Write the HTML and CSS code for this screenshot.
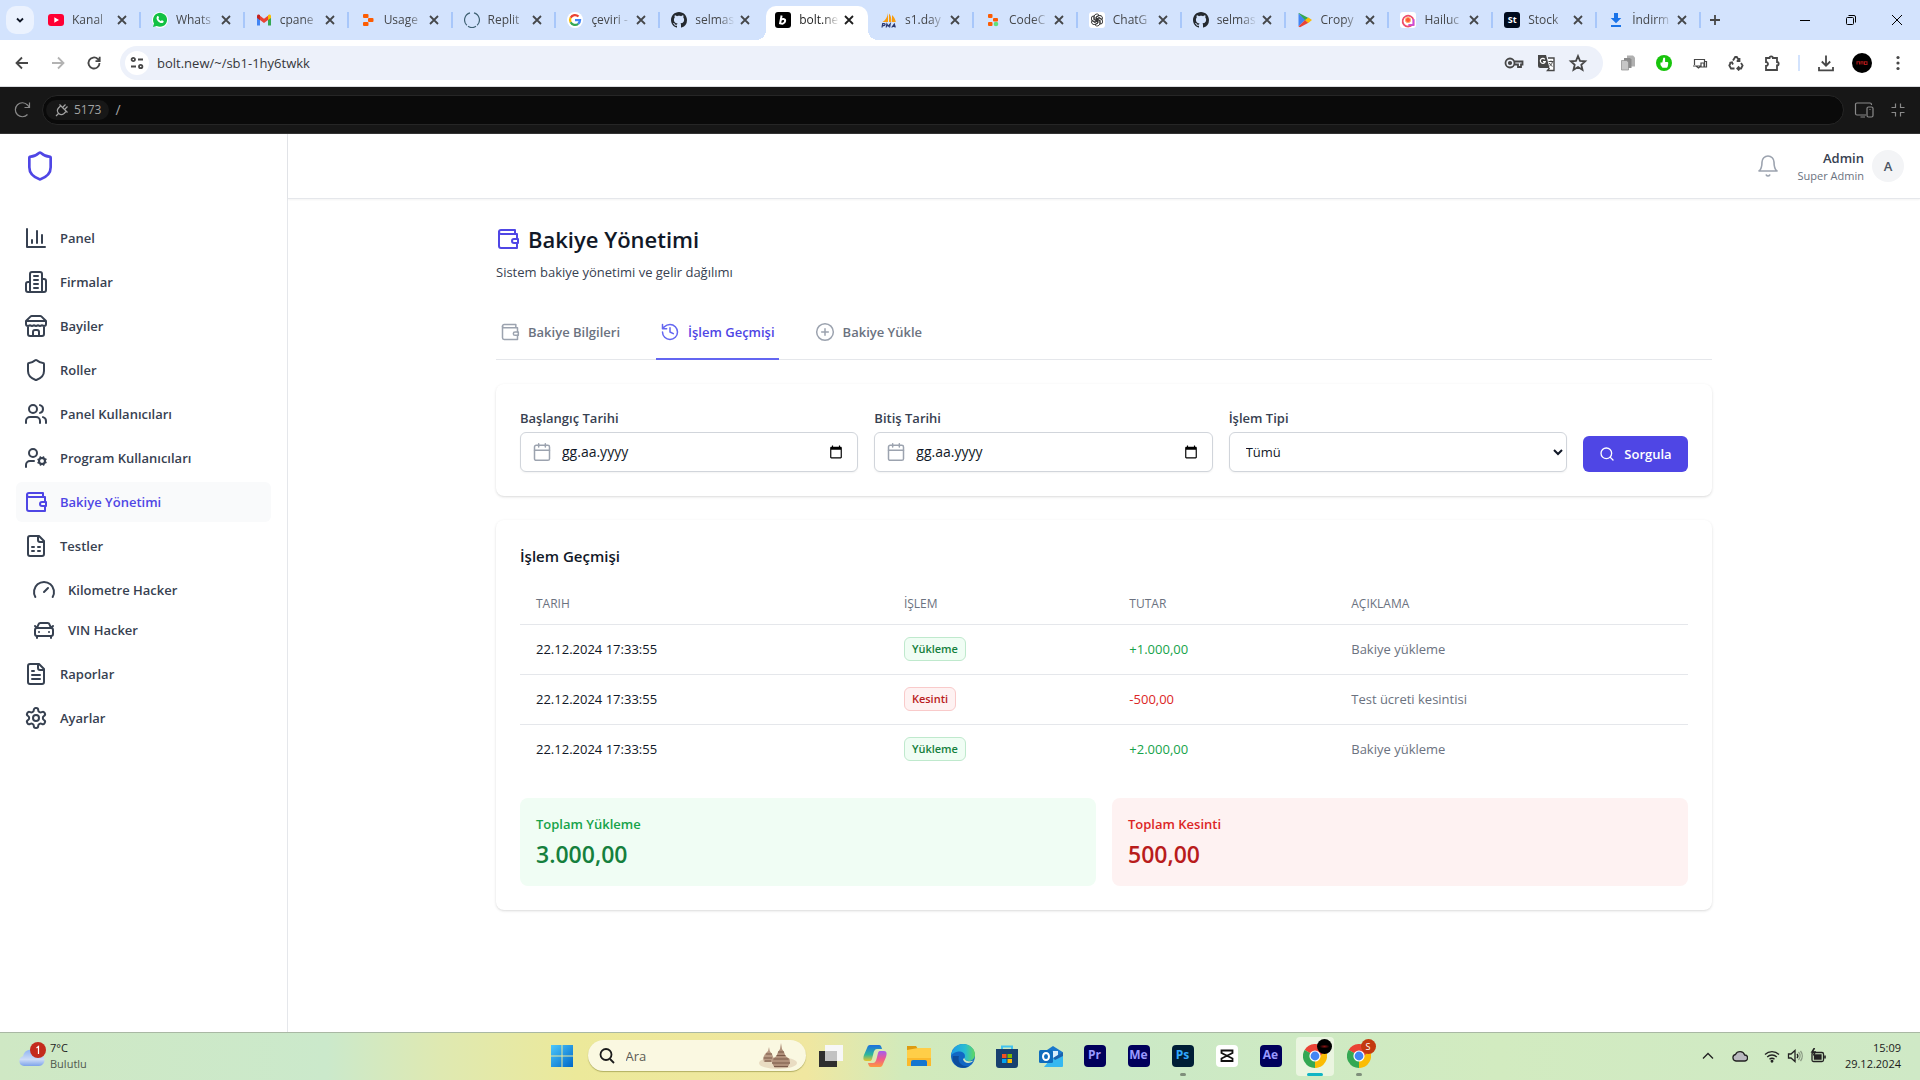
FILE: index.html
```html
<!DOCTYPE html>
<html lang="tr">
<head>
<meta charset="utf-8">
<meta name="viewport" content="width=device-width, initial-scale=1">
<title>Bakiye Yönetimi</title>
<link rel="stylesheet" href="styles.css">
</head>
<body>
<svg class="sprite" aria-hidden="true">
  <symbol id="i-x" viewBox="0 0 16 16"><path d="M4 4l8 8M12 4l-8 8"/></symbol>
  <symbol id="i-github" viewBox="0 0 16 16"><path fill="#24292f" d="M8 0C3.58 0 0 3.58 0 8c0 3.54 2.29 6.53 5.47 7.59.4.07.55-.17.55-.38 0-.19-.01-.82-.01-1.49-2.01.37-2.53-.49-2.69-.94-.09-.23-.48-.94-.82-1.13-.28-.15-.68-.52-.01-.53.63-.01 1.08.58 1.23.82.72 1.21 1.87.87 2.33.66.07-.52.28-.87.51-1.07-1.78-.2-3.64-.89-3.64-3.95 0-.87.31-1.59.82-2.15-.08-.2-.36-1.02.08-2.12 0 0 .67-.21 2.2.82.64-.18 1.32-.27 2-.27s1.36.09 2 .27c1.53-1.04 2.2-.82 2.2-.82.44 1.1.16 1.92.08 2.12.51.56.82 1.27.82 2.15 0 3.07-1.87 3.75-3.65 3.95.29.25.54.73.54 1.48 0 1.07-.01 1.93-.01 2.2 0 .21.15.46.55.38A8.01 8.01 0 0 0 16 8c0-4.42-3.58-8-8-8z"/></symbol>
  <symbol id="i-shield" viewBox="0 0 24 24"><path d="M20 13c0 5-3.5 7.5-7.66 8.95a1 1 0 0 1-.67-.01C7.5 20.5 4 18 4 13V6a1 1 0 0 1 1-1c2 0 4.5-1.2 6.24-2.72a1.17 1.17 0 0 1 1.52 0C14.51 3.81 17 5 19 5a1 1 0 0 1 1 1z"/></symbol>
  <symbol id="i-wallet" viewBox="0 0 24 24"><path d="M21 12V7H5a2 2 0 0 1 0-4h14v4"/><path d="M3 5v14a2 2 0 0 0 2 2h16v-5"/><path d="M18 12a2 2 0 0 0 0 4h4v-4Z"/></symbol>
  <symbol id="i-calendar" viewBox="0 0 24 24"><path d="M8 2v4M16 2v4M3 10h18"/><rect x="3" y="4" width="18" height="18" rx="2"/></symbol>
  <symbol id="i-picker" viewBox="0 0 24 24"><path d="M20 3h-1V1h-2v2H7V1H5v2H4c-1.100 0-2 .9-2 2v16c0 1.100.9 2 2 2h16c1.100 0 2-.9 2-2V5c0-1.100-.9-2-2-2zm0 18H4V8h16v13z"/></symbol>
  <symbol id="i-chrome" viewBox="0 0 24 24"><path fill="#ea4335" d="M12 12L1.600 6A12 12 0 0 1 22.400 6z"/><path fill="#34a853" d="M12 12L12 24A12 12 0 0 1 1.600 6z"/><path fill="#fbbc05" d="M12 12L22.400 6A12 12 0 0 1 12 24z"/><path fill="#ea4335" d="M12 6.400h10.600L17 12z"/><path fill="#34a853" d="M7 9.200L1.600 6.500 6 18l5-1z"/><path fill="#fbbc05" d="M17 15l-5 9 6-2z"/><circle cx="12" cy="12" r="5.600" fill="#fff"/><circle cx="12" cy="12" r="4.400" fill="#4285f4"/></symbol>
</svg>

<header class="browser">
  <div class="tabstrip">
    <button class="tab-search" aria-label="Sekmelerde ara"><svg class="line-icon s16" viewBox="0 0 16 16"><path d="M5 6.500l3 3 3-3"/></svg></button>
    <div class="tabs">
      <div class="tab"><svg class="fav" viewBox="0 0 16 16"><rect y="2" width="16" height="12" rx="3" fill="#ff0033"/><path d="M6.300 5.300v5.400L11 8z" fill="#fff"/></svg><span class="tab-title">Kanal</span><button class="tab-close" aria-label="Kapat"><svg class="line-icon"><use href="#i-x"/></svg></button></div>
      <div class="tab"><svg class="fav" viewBox="0 0 16 16"><circle cx="8" cy="8" r="8" fill="#fff"/><path fill="#12c143" d="M1 15l1-3.600A7 7 0 1 1 4.700 14z"/><path fill="#fff" d="M5.200 4.200c.5-.5 1-.3 1.200.1l.6 1.400c0 .4-.4.8-.6 1 .5 1 1.500 1.900 2.600 2.300.4-.2.600-.8 1-.8l1.500.7c.3.400.1 1.300-.3 1.600-1.500 1.200-3.700.3-5.200-1.200S4 5.500 5.200 4.200z"/></svg><span class="tab-title">Whats</span><button class="tab-close" aria-label="Kapat"><svg class="line-icon"><use href="#i-x"/></svg></button></div>
      <div class="tab"><svg class="fav" viewBox="0 0 16 16"><path fill="#4285f4" d="M1 4v9.500h3V7z"/><path fill="#34a853" d="M12 7v6.500h3V4z"/><path fill="#ea4335" d="M3 3l5 3.800L13 3v4.200L8 11 3 7.200z"/><path fill="#c5221f" d="M1 4c0-1.500 1.700-2 3-1v5L1 6z"/><path fill="#fbbc04" d="M15 4c0-1.500-1.700-2-3-1v5l3-2z"/></svg><span class="tab-title">cpane</span><button class="tab-close" aria-label="Kapat"><svg class="line-icon"><use href="#i-x"/></svg></button></div>
      <div class="tab"><svg class="fav" viewBox="0 0 16 16" fill="#fd5c02"><rect x="3" y="2" width="5.500" height="4" rx="1"/><rect x="8" y="6" width="5.500" height="4" rx="1"/><rect x="3" y="10" width="5.500" height="4" rx="1"/></svg><span class="tab-title">Usage</span><button class="tab-close" aria-label="Kapat"><svg class="line-icon"><use href="#i-x"/></svg></button></div>
      <div class="tab"><svg class="fav" viewBox="0 0 16 16" fill="none" stroke="#3f6173" stroke-width="1.200"><path d="M10 .8a7.400 7.400 0 0 1 3.200 12.400M12 14.300a7.400 7.400 0 0 1-8 0M2.800 13.200A7.400 7.400 0 0 1 6 .8"/></svg><span class="tab-title">Replit</span><button class="tab-close" aria-label="Kapat"><svg class="line-icon"><use href="#i-x"/></svg></button></div>
      <div class="tab"><svg class="fav" viewBox="0 0 16 16"><circle cx="8" cy="8" r="8" fill="#fff"/><g fill="none" stroke-width="2.300"><path stroke="#ea4335" d="M3.600 5.700A5 5 0 0 1 11.500 4.500"/><path stroke="#fbbc05" d="M3.600 10.300a5 5 0 0 1 0-4.600"/><path stroke="#34a853" d="M11.200 11.800a5 5 0 0 1-7.600-1.500"/><path stroke="#4285f4" d="M8 8.100h5a5 5 0 0 1-1.800 3.700"/></g></svg><span class="tab-title">çeviri -</span><button class="tab-close" aria-label="Kapat"><svg class="line-icon"><use href="#i-x"/></svg></button></div>
      <div class="tab before-active"><svg class="fav"><use href="#i-github"/></svg><span class="tab-title">selmas</span><button class="tab-close" aria-label="Kapat"><svg class="line-icon"><use href="#i-x"/></svg></button></div>
      <div class="tab active"><svg class="fav" viewBox="0 0 16 16"><rect width="16" height="16" rx="3" fill="#000"/><path d="M6.600 3.500L4.900 12.200M5.600 8.200c1.500-2 4.900-1.500 4.500 1-.4 2.600-3.700 3.400-4.900 1.600" fill="none" stroke="#fff" stroke-width="2"/></svg><span class="tab-title">bolt.ne</span><button class="tab-close" aria-label="Kapat"><svg class="line-icon"><use href="#i-x"/></svg></button></div>
      <div class="tab"><svg class="fav" viewBox="0 0 16 16"><path fill="#f89c0e" d="M7 1v9H1.500C5 8 6.500 4.500 7 1zM8 1.500c2 2 2.500 5 2.300 8.500H8zM11 3c2 2 3.500 4.500 3.800 7H11z"/><path d="M1 15.500l.7-3.800h1.500c1.500 0 1 1.900-.3 1.900H1.600M5.200 15.500l.7-3.500 1.300 2.200L9.200 12l-.6 3.500M10.700 15.500l2.600-3.500 1 3.500M11.800 14.300H14" fill="none" stroke="#2d3a72" stroke-width="1.200"/></svg><span class="tab-title">s1.day</span><button class="tab-close" aria-label="Kapat"><svg class="line-icon"><use href="#i-x"/></svg></button></div>
      <div class="tab"><svg class="fav" viewBox="0 0 16 16"><g fill="#fd5c02"><rect x="3" y="2" width="4.500" height="4" rx="1"/><rect x="8" y="6" width="5" height="3.500" rx="1"/><rect x="3" y="10" width="4.500" height="4" rx="1"/></g><circle cx="11" cy="12" r="2.300" fill="#5fe07c"/></svg><span class="tab-title">CodeC</span><button class="tab-close" aria-label="Kapat"><svg class="line-icon"><use href="#i-x"/></svg></button></div>
      <div class="tab"><svg class="fav" viewBox="0 0 16 16"><rect width="16" height="16" rx="3" fill="#fff"/><g fill="none" stroke="#333" stroke-width=".9"><path d="M8 8.800L5.200 7.200V4.600a2.600 2.600 0 0 1 4.800-1.400L7 5v3.200"/><path d="M8 8.800L5.200 7.200V4.600a2.600 2.600 0 0 1 4.800-1.400L7 5v3.200" transform="rotate(60 8 8)"/><path d="M8 8.800L5.200 7.200V4.600a2.600 2.600 0 0 1 4.800-1.400L7 5v3.200" transform="rotate(120 8 8)"/><path d="M8 8.800L5.200 7.200V4.600a2.600 2.600 0 0 1 4.800-1.400L7 5v3.200" transform="rotate(180 8 8)"/><path d="M8 8.800L5.200 7.200V4.600a2.600 2.600 0 0 1 4.800-1.400L7 5v3.200" transform="rotate(240 8 8)"/><path d="M8 8.800L5.200 7.200V4.600a2.600 2.600 0 0 1 4.800-1.400L7 5v3.200" transform="rotate(300 8 8)"/></g></svg><span class="tab-title">ChatG</span><button class="tab-close" aria-label="Kapat"><svg class="line-icon"><use href="#i-x"/></svg></button></div>
      <div class="tab"><svg class="fav"><use href="#i-github"/></svg><span class="tab-title">selmas</span><button class="tab-close" aria-label="Kapat"><svg class="line-icon"><use href="#i-x"/></svg></button></div>
      <div class="tab"><svg class="fav" viewBox="0 0 16 16"><path fill="#34a853" d="M2 1l9.500 5L8 9 1.500 1.500z"/><path fill="#4285f4" d="M1.500 1.500V14.500L8 8z"/><path fill="#ea4335" d="M1.500 14.500L8 8l3.500 2.800L3 15.300z"/><path fill="#fbbc04" d="M11.500 5.500L15 8l-3.700 3L8 8z"/></svg><span class="tab-title">Cropy</span><button class="tab-close" aria-label="Kapat"><svg class="line-icon"><use href="#i-x"/></svg></button></div>
      <div class="tab"><svg class="fav" viewBox="0 0 16 16"><rect width="16" height="16" rx="3" fill="#fff"/><path d="M12.500 12.500A5.500 5.500 0 1 1 13.500 8v5H8.500" fill="none" stroke="#ee4d6a" stroke-width="1.700"/><path d="M13.500 7v6H8.500" fill="none" stroke="#c94be0" stroke-width="1.700"/><circle cx="8" cy="8" r="2.600" fill="#ff5a36" stroke="#ffb36b"/></svg><span class="tab-title">Hailuc</span><button class="tab-close" aria-label="Kapat"><svg class="line-icon"><use href="#i-x"/></svg></button></div>
      <div class="tab"><span class="fav fav-st">St</span><span class="tab-title">Stock</span><button class="tab-close" aria-label="Kapat"><svg class="line-icon"><use href="#i-x"/></svg></button></div>
      <div class="tab"><svg class="fav" viewBox="0 0 16 16" fill="#1a73e8"><path d="M6 1h4v5h3.300L8 11.300 2.700 6H6zM3 13h10v2H3z"/></svg><span class="tab-title">İndirm</span><button class="tab-close" aria-label="Kapat"><svg class="line-icon"><use href="#i-x"/></svg></button></div>
    </div>
    <button class="new-tab" aria-label="Yeni sekme"><svg class="line-icon s16" viewBox="0 0 16 16"><path d="M8 3v10M3 8h10"/></svg></button>
    <div class="window-buttons">
      <button aria-label="Simge durumuna küçült"><svg viewBox="0 0 10 10"><path d="M0 5.500h10"/></svg></button>
      <button aria-label="Geri yükle"><svg viewBox="0 0 10 10"><rect x=".5" y="2.500" width="7" height="7" rx="1"/><path d="M2.500.5H8a1.500 1.500 0 0 1 1.500 1.500v5.500"/></svg></button>
      <button aria-label="Pencereyi kapat"><svg viewBox="0 0 10 10"><path d="M0 0l10 10M10 0L0 10"/></svg></button>
    </div>
  </div>

  <div class="toolbar">
    <div class="nav-buttons">
      <button aria-label="Geri"><svg class="line-icon s16" viewBox="0 0 16 16"><path d="M14 8H2.500M8 2.500L2.500 8 8 13.500"/></svg></button>
      <button class="dim" aria-label="İleri"><svg class="line-icon s16" viewBox="0 0 16 16"><path d="M2 8h11.500M8 2.500L13.500 8 8 13.500"/></svg></button>
      <button aria-label="Yenile"><svg class="line-icon s16" viewBox="0 0 16 16"><path d="M13.500 8A5.500 5.500 0 1 1 11.800 4L13.500 5.800M13.700 1.800v4.400H9.500"/></svg></button>
    </div>
    <div class="omnibox">
      <button class="site-info" aria-label="Site bilgileri"><svg class="line-icon s16" viewBox="0 0 16 16"><circle cx="4.300" cy="4.500" r="1.700"/><path d="M9 4.500h5M2 11.500h5"/><circle cx="11.700" cy="11.500" r="1.700"/></svg></button>
      <input class="url" type="text" aria-label="Adres" value="bolt.new/~/sb1-1hy6twkk">
      <button aria-label="Şifreler"><svg class="line-icon s20" viewBox="0 0 20 20"><circle cx="6" cy="10" r="4.500"/><circle cx="6" cy="10" r="1.200" fill="currentColor"/><path d="M10.500 8.500H18.500v3h-1.500v2.500h-3v-2.500h-3.500"/></svg></button>
      <button aria-label="Çevir"><svg class="s20" viewBox="0 0 20 20"><path d="M2 2h8l3.500 13H4a2 2 0 0 1-2-2z" fill="#474747"/><path d="M12 5h6v12.500h-6.500l2-2.500" fill="#fff" stroke="#474747" stroke-width="1.400"/><path d="M8.800 6.300a2.500 2.500 0 1 0 .4 2.400H7" fill="none" stroke="#fff" stroke-width="1.200"/><path d="M12.500 8.500h5M15 7.500v1M16.500 8.500c-.5 2.500-2 4-3 4.500M13.500 10c.5 1.500 2 3 3 3.300" fill="none" stroke="#474747"/></svg></button>
      <button aria-label="Yer işareti"><svg class="line-icon s20" viewBox="0 0 20 20"><path d="M10 3l2 4.800 5.200.5-3.900 3.400 1.200 5.100L10 14.100l-4.500 2.700 1.200-5.100-3.900-3.400 5.200-.5z"/></svg></button>
    </div>
    <div class="extensions">
      <button aria-label="Kopyala"><svg class="s16" viewBox="0 0 16 16"><path fill="#b0b0b0" d="M7 .500h6l2 2v9H7z"/><path fill="#8b8b8b" d="M4 3h6l1.500 1.500V13H4z"/><path fill="#c6c6c6" stroke="#8b8b8b" stroke-width=".7" d="M1.500 5.500h5L8.500 7v8h-7z"/></svg></button>
      <button aria-label="Uzantı"><svg class="s16" viewBox="0 0 16 16"><circle cx="8" cy="8" r="8" fill="#18c40c"/><path fill="#fff" d="M7.300 2.800h1.800V7h2.300c1 0 .9 1.300.8 2l-.5 2.600c-.2.900-.7 1.200-1.500 1.200H6.500L4.500 10V7.500h1.800z"/></svg></button>
      <button aria-label="Duyarlı görünüm"><svg class="line-icon thin s16" viewBox="0 0 16 16"><path d="M2.500 10V4.500h10V6M1 11h8M4 11l2.500 2L9 11M9 8h3v4H9zM12.500 6.500h2V12h-2z"/></svg></button>
      <button aria-label="Geri dönüşüm"><svg class="line-icon s16" viewBox="0 0 16 16"><path d="M5 5.500L7.200 2h1.600l2.200 3.500M11.500 3v3H8.700M2.500 8l-1.200 2.500L3 13.500h3.500M1.500 8l2.500-.6L5 9.500M9.500 13.500h3.600l1.500-3L13 8M11.300 11.500l-2 2 2 2"/></svg></button>
      <button aria-label="Uzantılar"><svg class="line-icon s18" viewBox="0 0 18 18"><path d="M3 4h3.500a1.700 1.700 0 0 1 3.400 0H14v4a1.700 1.700 0 0 1 0 3.400V16H3v-4a2 2 0 0 0 0-4z"/></svg></button>
      <span class="divider"></span>
      <button aria-label="İndirilenler"><svg class="line-icon s18" viewBox="0 0 18 18"><path d="M9 1.500v10M4.800 7.500L9 11.700l4.200-4.200M2 13v3.300h14V13"/></svg></button>
      <button aria-label="Profil"><svg class="s20" viewBox="0 0 20 20"><circle cx="10" cy="10" r="10"/><path d="M5 11.500V8.800h2.500v2.700M9 11.500V8.800h2v2.700M12.500 11.500V8.800H15v2.700z" fill="none" stroke="#a81717" stroke-width="1.100"/></svg></button>
      <button aria-label="Menü"><svg class="s16" viewBox="0 0 16 16" fill="#474747"><circle cx="8" cy="2.500" r="1.600"/><circle cx="8" cy="8" r="1.600"/><circle cx="8" cy="13.500" r="1.600"/></svg></button>
    </div>
  </div>
</header>

<div class="preview-bar">
  <button aria-label="Önizlemeyi yenile"><svg class="line-icon thin s20" viewBox="0 0 20 20"><path d="M15.500 14.500A7 7 0 1 1 15.500 5L17.500 7.500M17.500 2.500v5H12.500"/></svg></button>
  <div class="preview-url">
    <button class="port"><svg class="line-icon thin s16" viewBox="0 0 16 16"><path d="M2 14l2.500-2.500M7 3.500L4.500 6a3.900 3.900 0 0 0 5.500 5.500L12.500 9M5.500 2.500l8 8M9 5l2.500-2.500M11 7l2.500-2.500"/></svg>5173</button>
    <input class="path" type="text" aria-label="Yol" value="/">
  </div>
  <button aria-label="Cihazlar"><svg class="line-icon thin s20" viewBox="0 0 20 20"><path d="M12 15H3a1.500 1.500 0 0 1-1.500-1.500v-9A1.500 1.500 0 0 1 3 3h13a1.500 1.500 0 0 1 1.500 1.500V5M6.500 17H11"/><rect x="13" y="7" width="6" height="10" rx="1.500"/><path d="M15.500 9.500h1"/></svg></button>
  <button aria-label="Küçült"><svg class="line-icon thin s16" viewBox="0 0 16 16"><path d="M1.500 5.500h4v-4M14.500 5.500h-4v-4M1.500 10.500h4v4M14.500 10.500h-4v4"/></svg></button>
</div>

<div class="app">
  <aside class="sidebar">
    <div class="brand"><svg class="icon logo"><use href="#i-shield"/></svg></div>
    <nav class="menu">
      <a href="#"><svg class="icon" viewBox="0 0 24 24"><path d="M3 3v18h18M18 17V9M13 17V5M8 17v-3"/></svg>Panel</a>
      <a href="#"><svg class="icon" viewBox="0 0 24 24"><path d="M6 22V4a2 2 0 0 1 2-2h8a2 2 0 0 1 2 2v18Z"/><path d="M6 12H4a2 2 0 0 0-2 2v6a2 2 0 0 0 2 2h2M18 9h2a2 2 0 0 1 2 2v9a2 2 0 0 1-2 2h-2M10 6h4M10 10h4M10 14h4M10 18h4"/></svg>Firmalar</a>
      <a href="#"><svg class="icon" viewBox="0 0 24 24"><path d="m2 7 4.410-4.410A2 2 0 0 1 7.830 2h8.340a2 2 0 0 1 1.420.59L22 7M4 12v8a2 2 0 0 0 2 2h12a2 2 0 0 0 2-2v-8M15 22v-4a2 2 0 0 0-2-2h-2a2 2 0 0 0-2 2v4M2 7h20M22 7v3a2 2 0 0 1-2 2a2.700 2.700 0 0 1-1.590-.63.7.7 0 0 0-.82 0A2.700 2.700 0 0 1 16 12a2.700 2.700 0 0 1-1.590-.63.7.7 0 0 0-.82 0A2.700 2.700 0 0 1 12 12a2.700 2.700 0 0 1-1.590-.63.7.7 0 0 0-.82 0A2.700 2.700 0 0 1 8 12a2.700 2.700 0 0 1-1.590-.63.7.7 0 0 0-.82 0A2.700 2.700 0 0 1 4 12a2 2 0 0 1-2-2V7"/></svg>Bayiler</a>
      <a href="#"><svg class="icon"><use href="#i-shield"/></svg>Roller</a>
      <a href="#"><svg class="icon" viewBox="0 0 24 24"><path d="M16 21v-2a4 4 0 0 0-4-4H6a4 4 0 0 0-4 4v2M22 21v-2a4 4 0 0 0-3-3.870M16 3.130a4 4 0 0 1 0 7.750"/><circle cx="9" cy="7" r="4"/></svg>Panel Kullanıcıları</a>
      <a href="#"><svg class="icon" viewBox="0 0 24 24"><circle cx="18" cy="15" r="3"/><circle cx="9" cy="7" r="4"/><path d="M10 15H6a4 4 0 0 0-4 4v2M21.700 16.400l-.9-.3M15.200 13.900l-.9-.3M16.600 18.700l.3-.9M19.100 12.200l.3-.9M19.600 18.700l-.4-1M16.800 12.300l-.4-1M14.300 16.600l1-.4M20.700 13.800l1-.4"/></svg>Program Kullanıcıları</a>
      <a href="#" class="current" aria-current="page"><svg class="icon"><use href="#i-wallet"/></svg>Bakiye Yönetimi</a>
      <a href="#"><svg class="icon" viewBox="0 0 24 24"><path d="M15 2H6a2 2 0 0 0-2 2v16a2 2 0 0 0 2 2h12a2 2 0 0 0 2-2V7Z"/><path d="M14 2v4a2 2 0 0 0 2 2h4M8 13h2M14 13h2M8 17h2M14 17h2"/></svg>Testler</a>
      <div class="submenu">
        <a href="#"><svg class="icon" viewBox="0 0 24 24"><path d="m12 14 4-4M3.340 19a10 10 0 1 1 17.320 0"/></svg>Kilometre Hacker</a>
        <a href="#"><svg class="icon" viewBox="0 0 24 24"><path d="m21 8-2 2-1.500-3.700A2 2 0 0 0 15.646 5H8.400a2 2 0 0 0-1.903 1.257L5 10 3 8M7 14h.01M17 14h.01M5 18v2M19 18v2"/><rect x="3" y="10" width="18" height="8" rx="2"/></svg>VIN Hacker</a>
      </div>
      <a href="#"><svg class="icon" viewBox="0 0 24 24"><path d="M15 2H6a2 2 0 0 0-2 2v16a2 2 0 0 0 2 2h12a2 2 0 0 0 2-2V7Z"/><path d="M14 2v4a2 2 0 0 0 2 2h4M10 9H8M16 13H8M16 17H8"/></svg>Raporlar</a>
      <a href="#"><svg class="icon" viewBox="0 0 24 24"><path d="M12.220 2h-.44a2 2 0 0 0-2 2v.18a2 2 0 0 1-1 1.730l-.43.25a2 2 0 0 1-2 0l-.15-.08a2 2 0 0 0-2.730.73l-.22.38a2 2 0 0 0 .73 2.730l.15.1a2 2 0 0 1 1 1.720v.51a2 2 0 0 1-1 1.740l-.15.09a2 2 0 0 0-.73 2.730l.22.38a2 2 0 0 0 2.730.73l.15-.08a2 2 0 0 1 2 0l.43.25a2 2 0 0 1 1 1.730V20a2 2 0 0 0 2 2h.44a2 2 0 0 0 2-2v-.18a2 2 0 0 1 1-1.730l.43-.25a2 2 0 0 1 2 0l.15.08a2 2 0 0 0 2.730-.73l.22-.39a2 2 0 0 0-.73-2.730l-.15-.08a2 2 0 0 1-1-1.740v-.5a2 2 0 0 1 1-1.740l.15-.09a2 2 0 0 0 .73-2.730l-.22-.38a2 2 0 0 0-2.730-.73l-.15.08a2 2 0 0 1-2 0l-.43-.25a2 2 0 0 1-1-1.730V4a2 2 0 0 0-2-2z"/><circle cx="12" cy="12" r="3"/></svg>Ayarlar</a>
    </nav>
  </aside>

  <div class="content">
    <header class="topbar">
      <button class="bell" aria-label="Bildirimler"><svg class="icon" viewBox="0 0 24 24"><path d="M6 8a6 6 0 0 1 12 0c0 7 3 9 3 9H3s3-2 3-9M10.300 21a1.940 1.940 0 0 0 3.400 0"/></svg></button>
      <div class="account">
        <div class="account-text"><span class="account-name">Admin</span><span class="account-role">Super Admin</span></div>
        <span class="avatar">A</span>
      </div>
    </header>

    <main class="page">
      <h1><svg class="icon"><use href="#i-wallet"/></svg>Bakiye Yönetimi</h1>
      <p class="lead">Sistem bakiye yönetimi ve gelir dağılımı</p>

      <nav class="page-tabs">
        <a href="#"><svg class="icon s20"><use href="#i-wallet"/></svg>Bakiye Bilgileri</a>
        <a href="#" class="selected"><svg class="icon s20" viewBox="0 0 24 24"><path d="M3 12a9 9 0 1 0 9-9 9.750 9.750 0 0 0-6.740 2.740L3 8M3 3v5h5M12 7v5l4 2"/></svg>İşlem Geçmişi</a>
        <a href="#"><svg class="icon s20" viewBox="0 0 24 24"><circle cx="12" cy="12" r="10"/><path d="M8 12h8M12 8v8"/></svg>Bakiye Yükle</a>
      </nav>

      <form class="card filters">
        <div class="field">
          <label for="start">Başlangıç Tarihi</label>
          <div class="date"><svg class="icon s20"><use href="#i-calendar"/></svg><input id="start" type="text" placeholder="gg.aa.yyyy"><button type="button" aria-label="Takvimi aç"><svg><use href="#i-picker"/></svg></button></div>
        </div>
        <div class="field">
          <label for="end">Bitiş Tarihi</label>
          <div class="date"><svg class="icon s20"><use href="#i-calendar"/></svg><input id="end" type="text" placeholder="gg.aa.yyyy"><button type="button" aria-label="Takvimi aç"><svg><use href="#i-picker"/></svg></button></div>
        </div>
        <div class="field">
          <label for="kind">İşlem Tipi</label>
          <select id="kind"><option>Tümü</option><option>Yükleme</option><option>Kesinti</option></select>
        </div>
        <button class="submit" type="button"><svg class="icon s16" viewBox="0 0 24 24"><circle cx="11" cy="11" r="8"/><path d="m21 21-4.300-4.300"/></svg>Sorgula</button>
      </form>

      <section class="card">
        <h2>İşlem Geçmişi</h2>
        <table>
          <colgroup><col class="c-date"><col class="c-kind"><col class="c-amount"><col></colgroup>
          <thead><tr><th>TARIH</th><th>İŞLEM</th><th>TUTAR</th><th>AÇIKLAMA</th></tr></thead>
          <tbody>
            <tr><td>22.12.2024 17:33:55</td><td><span class="badge in">Yükleme</span></td><td class="plus">+1.000,00</td><td class="note">Bakiye yükleme</td></tr>
            <tr><td>22.12.2024 17:33:55</td><td><span class="badge out">Kesinti</span></td><td class="minus">-500,00</td><td class="note">Test ücreti kesintisi</td></tr>
            <tr><td>22.12.2024 17:33:55</td><td><span class="badge in">Yükleme</span></td><td class="plus">+2.000,00</td><td class="note">Bakiye yükleme</td></tr>
          </tbody>
        </table>
        <div class="totals">
          <div class="total in"><p>Toplam Yükleme</p><strong>3.000,00</strong></div>
          <div class="total out"><p>Toplam Kesinti</p><strong>500,00</strong></div>
        </div>
      </section>
    </main>
  </div>
</div>

<footer class="taskbar">
  <button class="weather">
    <svg viewBox="0 0 28 28"><defs><linearGradient id="cloud" x1="0" y1="0" x2="0" y2="1"><stop offset="0" stop-color="#8fb4f2"/><stop offset=".6" stop-color="#cddcf7"/><stop offset="1" stop-color="#7da3ea"/></linearGradient></defs><path d="M6 24a5 5 0 0 1-1-9.800A8 8 0 0 1 20 12a6 6 0 0 1 1 12z" fill="url(#cloud)"/><circle cx="20" cy="8" r="8" fill="#c42b1c"/><path d="M18.500 6l2-1.500V12" fill="none" stroke="#fff" stroke-width="1.200"/></svg>
    <span class="weather-text"><span>7°C</span><span class="muted">Bulutlu</span></span>
  </button>
  <div class="dock">
    <button class="dock-item" aria-label="Başlat"><svg viewBox="0 0 24 24"><defs><linearGradient id="win" x1="0" y1="0" x2="1" y2="1"><stop offset="0" stop-color="#4cc8fb"/><stop offset="1" stop-color="#0067c8"/></linearGradient></defs><path fill="url(#win)" d="M1 1h10.500v10.500H1zM12.500 1H23v10.500H12.500zM1 12.500h10.500V23H1zM12.500 12.500H23V23H12.500z"/></svg></button>
    <label class="search">
      <svg class="line-icon s18" viewBox="0 0 18 18"><circle cx="8" cy="7.500" r="5.500"/><path d="M12 12l4 4"/></svg>
      <input type="text" placeholder="Ara" aria-label="Ara">
      <svg class="temple" viewBox="0 0 40 26"><ellipse cx="20" cy="20" rx="19" ry="6" fill="#e9dcc2"/><path fill="#b0907a" d="M23 0l1 6 2 3 1.500 4 4 3 .5 4-2.500 4.500h-13L14 20l.5-4 4-3L20 9l2-3z"/><path fill="#b89a84" d="M11 4l.8 4 2.200 3 1.500 4-1 4H6l-1-4 2-4 3-3z"/><path d="M20 9h6M18.500 12.500h9M15.500 16h15M14 20h18M16 23.500h14M8 11h6M6 15h8M7 18h6" stroke="#7a5a49"/></svg>
    </label>
    <button class="dock-item" aria-label="Görev görünümü"><svg viewBox="0 0 24 24"><path fill="#2e2e2e" d="M0 7h18v16H0z"/><path fill="#f7f7f7" d="M6 1h18v16H6z"/><path fill="#c2c2c2" d="M6 7h12v10H6z"/></svg></button>
    <button class="dock-item" aria-label="Copilot"><svg viewBox="0 0 24 24"><defs><linearGradient id="cp1" x1="0" y1="0" x2="0" y2="1"><stop offset="0" stop-color="#1c6fe0"/><stop offset=".6" stop-color="#2db79a"/><stop offset="1" stop-color="#e8c52b"/></linearGradient><linearGradient id="cp2" x1="0" y1="0" x2="0" y2="1"><stop offset="0" stop-color="#a45cf0"/><stop offset=".5" stop-color="#ee5b8d"/><stop offset="1" stop-color="#ff9a3c"/></linearGradient></defs><path fill="url(#cp1)" d="M7 1h9c2 0 2.500 2 3 4h-5c-2 0-3 2-3.500 4L9 15c-.5 1.500-1 2-2.500 2H3c-3 0-3-3-2-6L4 4c.6-2 1.500-3 3-3z"/><path fill="url(#cp2)" d="M17 23H8c-2 0-2.500-2-3-4h5c2 0 3-2 3.500-4L15 9c.5-1.500 1-2 2.500-2H21c3 0 3 3 2 6l-3 7c-.6 2-1.500 3-3 3z"/></svg></button>
    <button class="dock-item" aria-label="Dosya Gezgini"><svg viewBox="0 0 24 24"><path fill="#dd9b10" d="M0 2h9l2 3v4H0z"/><path fill="#ffce48" d="M0 6l11-2h13v18H0z"/><path fill="#fbb92c" d="M0 14h24v8H0z"/><path fill="#1476d0" d="M4 22v-4a2 2 0 0 1 2-2h12a2 2 0 0 1 2 2v4z"/></svg></button>
    <button class="dock-item" aria-label="Edge"><svg viewBox="0 0 24 24"><defs><linearGradient id="edge" x1="0" y1="0" x2="1" y2="0"><stop offset="0" stop-color="#1d9be8"/><stop offset=".6" stop-color="#29bdd0"/><stop offset="1" stop-color="#62d95c"/></linearGradient></defs><circle cx="12" cy="12" r="12" fill="#1267c4"/><path fill="url(#edge)" d="M0 12C1 4 6 0 12 0c7 0 12 5 12 10.500 0 4-3 6.500-6 6.500-3.500 0-5-1.500-4.500-3C15 11.500 13 7.500 9 7.500 5 7.500 1 9.500 0 12z"/><path fill="#0d4d9c" d="M8 12c-2 6 3 11 10 10-8 5-18-1-16-10z"/><path fill="#cfe9c2" d="M13.500 14c-.5 2.500 5 5 9.500 2-3 4-10 4-11-1z"/></svg></button>
    <button class="dock-item" aria-label="Microsoft Store"><svg viewBox="0 0 24 24"><path d="M7 6V2.500h10V6" fill="none" stroke="#42c3f0" stroke-width="2"/><path fill="#17406f" d="M1 5h22v16a3 3 0 0 1-3 3H4a3 3 0 0 1-3-3z"/><path fill="#f25022" d="M7 10h4.500v4H7z"/><path fill="#7fba00" d="M12.500 10H17v4h-4.500z"/><path fill="#00a4ef" d="M7 15h4.500v4H7z"/><path fill="#ffb900" d="M12.500 15H17v4h-4.500z"/></svg></button>
    <button class="dock-item" aria-label="Outlook"><svg viewBox="0 0 24 24"><path fill="#1a78cc" d="M5 8l9-6 9.500 6v5H5z"/><path fill="#d8eefc" d="M9 7h10v8H9z"/><path fill="#35b8f1" d="M5 23h18a1 1 0 0 0 1-1V8L10 17z"/><path fill="#1a62ad" d="M14 14l10-6v4l-8 4z"/><rect y="6" width="14" height="13" rx="1.500" fill="#0f6cbd"/><ellipse cx="7" cy="12.500" rx="3" ry="3.500" fill="none" stroke="#fff" stroke-width="2"/></svg></button>
    <button class="dock-item" aria-label="Premiere Pro"><span class="adobe">Pr</span></button>
    <button class="dock-item" aria-label="Media Encoder"><span class="adobe">Me</span></button>
    <button class="dock-item running" aria-label="Photoshop"><span class="adobe ps">Ps</span></button>
    <button class="dock-item" aria-label="CapCut"><svg viewBox="0 0 24 24"><rect x="1" y="1" width="22" height="22" rx="4" fill="#fff"/><path d="M17.500 9V6.500h-11V9l11 5.500V17h-11v-2.500l11-5.500z" fill="none" stroke="#111" stroke-width="1.800"/></svg></button>
    <button class="dock-item" aria-label="After Effects"><span class="adobe">Ae</span></button>
    <button class="dock-item focused" aria-label="Chrome"><svg viewBox="0 0 24 24"><use href="#i-chrome"/></svg><span class="profile-dot dark"></span></button>
    <button class="dock-item running" aria-label="Chrome"><svg viewBox="0 0 24 24"><use href="#i-chrome"/></svg><span class="profile-dot">S</span></button>
  </div>
  <div class="tray">
    <button aria-label="Gizli simgeler"><svg viewBox="0 0 16 16"><path d="M3 10.500L8 5.500l5 5"/></svg></button>
    <button class="cloud" aria-label="OneDrive"><svg viewBox="0 0 16 16"><path fill="#b9b9bf" d="M4 13a3.300 3.300 0 0 1-.5-6.500A5 5 0 0 1 12.700 7 3 3 0 0 1 12.500 13z"/></svg></button>
    <button class="status" aria-label="Ağ, ses ve pil">
      <svg viewBox="0 0 16 16"><path d="M1 6.500a10 10 0 0 1 14 0M3.200 9a6.800 6.800 0 0 1 9.600 0M5.500 11.300a3.500 3.500 0 0 1 5 0"/><circle cx="8" cy="13.300" r=".8"/></svg>
      <svg viewBox="0 0 16 16"><path d="M1.500 6h2.500L8 2.500v11L4 10H1.500zM10 6a3 3 0 0 1 0 4"/><path d="M11.500 4a6 6 0 0 1 0 8M13.500 3a8 8 0 0 1 0 10" opacity=".4"/></svg>
      <svg viewBox="0 0 16 16"><rect x="2" y="4.500" width="11.500" height="9" rx="1.500"/><path d="M4.500 7h6.500v4H4.500z" fill="#222"/><path d="M15 7.500v3M4.500 0L2 4h3L3.500 7.500" stroke-width="1.600"/></svg>
    </button>
    <button class="clock"><span>15:09</span><span>29.12.2024</span></button>
  </div>
</footer>
</body>
</html>
```
FILE: styles.css
```css
*, *::before, *::after { box-sizing: border-box; }

body {
  margin: 0;
  min-height: 100vh;
  display: flex;
  flex-direction: column;
  background: #fff;
  color: #111827;
  font-family: "Open Sans", "Noto Sans", sans-serif;
  font-size: 13px;
  line-height: 20px;
}

button, input, select { font: inherit; color: inherit; }
button { border: 0; padding: 0; background: none; }
input { border: 0; padding: 0; background: none; min-width: 0; outline: 0; }
a { color: inherit; text-decoration: none; }
h1, h2, p { margin: 0; }
svg { display: block; flex: none; }
.sprite { position: absolute; width: 0; height: 0; }

.line-icon { width: 16px; height: 16px; fill: none; stroke: currentColor; stroke-width: 1.8; }
.line-icon.thin { stroke-width: 1.2; }
.icon { width: 24px; height: 24px; fill: none; stroke: currentColor; stroke-width: 2; stroke-linecap: round; stroke-linejoin: round; }
.s16 { width: 16px; height: 16px; }
.s18 { width: 18px; height: 18px; }
.s20 { width: 20px; height: 20px; }

/* Browser window */
.tabstrip { display: flex; height: 40px; background: #d3e3fd; font-size: 12px; }
.tab-search { display: grid; place-items: center; width: 28px; height: 28px; margin: 6px 3px 0 6px; border-radius: 10px; background: #ebf2fe; }
.tabs { flex: 1; max-width: 1664px; min-width: 0; display: flex; }
.tab { position: relative; flex: 1; min-width: 0; display: flex; align-items: center; height: 34px; margin-top: 6px; padding: 0 11px 6px; color: #45474a; }
.tab::after { content: ""; position: absolute; right: 0; top: 6px; width: 2px; height: 16px; background: #a8c7fa; }
.tab.active::after, .tab.before-active::after { display: none; }
.tab.active { color: #1f1f1f; background: #fff; margin-left: 2px; margin-right: 2px; padding-left: 9px; border-radius: 10px 10px 0 0; }
.tab.active::before { content: ""; position: absolute; left: -10px; right: -10px; bottom: 0; height: 10px; background: radial-gradient(circle at 0 0, transparent 10px, #fff 10px) left / 10px 10px no-repeat, radial-gradient(circle at 100% 0, transparent 10px, #fff 10px) right / 10px 10px no-repeat; }
.fav { width: 16px; height: 16px; margin-right: 8px; flex: none; }
.fav-st { border-radius: 3px; background: #000b1d; color: #fff; font-size: 9px; font-weight: 700; line-height: 15px; text-align: center; }
.tab-title { flex: 1; min-width: 0; white-space: nowrap; margin-right: 2px; -webkit-mask-image: linear-gradient(90deg, #000 60%, transparent); mask-image: linear-gradient(90deg, #000 60%, transparent); }
.new-tab { display: grid; place-items: center; width: 28px; height: 40px; color: #474747; }
.window-buttons { display: flex; margin-left: auto; }
.window-buttons button { display: grid; place-items: center; width: 46px; height: 40px; }
.window-buttons svg { width: 10px; height: 10px; overflow: visible; fill: none; stroke: #000; }

.toolbar { display: flex; align-items: center; height: 47px; padding: 0 4px; background: #fff; border-bottom: 1px solid #dadce0; color: #474747; }
.nav-buttons { display: flex; }
.nav-buttons button, .extensions button { display: grid; place-items: center; width: 36px; height: 34px; }
.nav-buttons .dim { color: #b3b3b3; }
.omnibox { flex: 1; display: flex; align-items: center; height: 34px; margin-left: 8px; padding: 0 15px 0 5px; border-radius: 17px; background: #edf1fa; gap: 12px; }
.site-info { display: grid; place-items: center; width: 24px; height: 24px; border-radius: 12px; background: #fff; }
.url { flex: 1; margin-left: -4px; color: #36373a; }
.extensions { display: flex; align-items: center; padding-left: 7px; }
.extensions .divider { width: 2px; height: 16px; margin: 0 8px; background: #d3e3fd; }

/* Preview address bar */
.preview-bar { display: flex; align-items: center; gap: 10px; height: 47px; padding: 0 14px 0 12px; background: #171717; border-bottom: 1px solid #333; color: #8a8a8a; }
.preview-bar > button:last-child { margin-left: 6px; }
.preview-url { flex: 1; display: flex; align-items: center; height: 30px; padding: 0 3px; gap: 6px; border: 1px solid #262626; border-radius: 15px; background: #0a0a0a; color: #a3a3a3; }
.port { display: flex; align-items: center; gap: 4px; height: 20px; padding: 0 8px; border-radius: 10px; background: #171717; font-size: 12px; }
.path { flex: 1; font-size: 14px; }

/* Application shell */
.app { flex: 1; display: flex; }
.sidebar { flex: none; width: 288px; border-right: 1px solid #e5e7eb; }
.brand { display: flex; align-items: center; height: 64px; padding: 0 24px; color: #4f46e5; }
.logo { width: 32px; height: 32px; }
.menu { display: flex; flex-direction: column; gap: 4px; padding: 20px 16px; color: #374151; font-weight: 600; }
.menu a { display: flex; align-items: center; gap: 12px; height: 40px; padding: 0 8px; border-radius: 6px; }
.menu .current { background: #f9fafb; color: #4f46e5; }
.submenu { padding-left: 8px; }

.content { flex: 1; min-width: 0; }
.topbar { display: flex; align-items: center; justify-content: flex-end; gap: 18px; height: 65px; padding: 0 16px; border-bottom: 1px solid #e5e7eb; box-shadow: 0 1px 2px rgb(0 0 0 / 5%); }
.bell { color: #9ca3af; }
.bell .icon { stroke-width: 1.6; }
.account { display: flex; align-items: center; gap: 8px; }
.account-text { display: flex; flex-direction: column; padding-top: 2px; text-align: right; line-height: 18px; }
.account-name { color: #374151; font-weight: 600; }
.account-role { color: #6b7280; font-size: 11px; }
.avatar { width: 32px; height: 32px; border-radius: 16px; background: #f3f4f6; color: #4b5563; font-weight: 600; line-height: 32px; text-align: center; }

.page { max-width: 1280px; margin: 0 auto; padding: 24px 32px; }
h1 { display: flex; align-items: center; gap: 8px; font-size: 22px; line-height: 32px; font-weight: 600; }
h1 .icon { color: #4f46e5; }
.lead { margin-top: 7px; color: #374151; }
.page-tabs { display: flex; gap: 32px; margin-top: 24px; border-bottom: 1px solid #e5e7eb; color: #6b7280; font-weight: 600; }
.page-tabs a { display: flex; align-items: center; gap: 8px; height: 54px; margin-bottom: -1px; padding: 0 4px; border-bottom: 2px solid transparent; }
.page-tabs .icon { color: #9ca3af; stroke-width: 1.8; }
.page-tabs .selected { border-color: #6366f1; color: #4f46e5; }
.page-tabs .selected .icon { color: #6366f1; }

.card { margin-top: 24px; padding: 24px; border-radius: 8px; background: #fff; box-shadow: 0 1px 3px rgb(0 0 0 / 12%), 0 1px 2px -1px rgb(0 0 0 / 10%); }
.filters { display: flex; align-items: flex-end; gap: 16px; }
.field { flex: 1; display: flex; flex-direction: column; gap: 4px; }
.field label { color: #374151; font-weight: 600; }
.date, select { display: flex; align-items: center; width: 100%; height: 40px; border: 1px solid #d1d5db; border-radius: 6px; background: #fff; box-shadow: 0 1px 2px rgb(0 0 0 / 5%); }
.date { gap: 10px; padding: 0 14px 0 11px; }
.date .icon { color: #9ca3af; stroke-width: 1.8; }
.date input { flex: 1; font-size: 14px; }
.date input::placeholder { color: #111827; }
.date button svg { width: 14px; height: 14px; }
select { padding: 0 0 0 12px; }
.submit { display: flex; align-items: center; justify-content: center; gap: 9px; min-width: 105px; height: 36px; padding: 0 16px; border-radius: 6px; background: #4f46e5; color: #fff; font-weight: 600; }

h2 { font-size: 15px; line-height: 24px; font-weight: 600; }
table { width: 100%; margin-top: 16px; border-collapse: collapse; table-layout: fixed; }
.c-date { width: 31.500%; }
.c-kind { width: 19.300%; }
.c-amount { width: 19%; }
th { height: 40px; padding: 0 16px; color: #6b7280; font-size: 12px; font-weight: 500; text-align: left; }
td { height: 50px; padding: 0 16px; border-top: 1px solid #e5e7eb; }
.badge { display: inline-block; padding: 0 7px; border: 1px solid; border-radius: 6px; font-size: 11px; font-weight: 600; line-height: 22px; vertical-align: middle; }
.badge.in { background: #f0fdf4; border-color: #bfe9cd; color: #15803d; }
.badge.out { background: #fef2f2; border-color: #f9caca; color: #b91c1c; }
.plus { color: #16a34a; }
.minus { color: #dc2626; }
.note { color: #6b7280; }
.totals { display: grid; grid-template-columns: 1fr 1fr; gap: 16px; margin-top: 24px; }
.total { padding: 16px; border-radius: 8px; font-weight: 600; }
.total strong { display: block; margin-top: 4px; font-size: 23px; line-height: 32px; font-weight: 600; }
.total.in { background: #f0fdf4; color: #16a34a; }
.total.in strong { color: #15803d; }
.total.out { background: #fef2f2; color: #dc2626; }
.total.out strong { color: #b91c1c; }

/* Desktop taskbar */
.taskbar { display: grid; grid-template-columns: 1fr auto 1fr; align-items: center; height: 48px; padding-bottom: 2px; border-top: 1px solid #a9b8a4; background: linear-gradient(90deg, #cfe8c4 0, #cbe9cb 17%, #dfe9b1 23%, #ece99a 30%, #f0e7a0 42%, #d2eabb 47%, #cbe9c6 58%, #d2ebc0 78%, #cfe9c6 100%); font-size: 11px; line-height: 16px; color: #1b1b1b; }
.weather { justify-self: start; display: flex; align-items: center; gap: 4px; padding-left: 18px; text-align: left; }
.weather svg { width: 28px; height: 28px; }
.weather-text, .clock { display: flex; flex-direction: column; }
.muted { color: #50584d; }
.dock { display: flex; align-items: center; }
.dock-item { position: relative; display: grid; place-items: center; width: 44px; height: 44px; }
.dock-item svg { width: 24px; height: 24px; }
.search { display: flex; align-items: center; gap: 10px; width: 218px; height: 31px; margin: 0 3px 0 4px; padding: 0 8px 0 10px; border-radius: 16px; background: #faf8e1; box-shadow: 0 1px 1px rgb(120 120 40 / 50%); font-size: 13px; }
.search input { flex: 1; }
.search input::placeholder { color: #5c5c55; }
.temple { width: 40px; height: 26px; }
.adobe { width: 22px; height: 22px; border-radius: 4px; background: #00005b; color: #9999ff; font-size: 12px; font-weight: 700; line-height: 20px; text-align: center; }
.adobe.ps { background: #001e36; color: #31a8ff; }
.running::after, .focused::after { content: ""; position: absolute; bottom: 2px; width: 6px; height: 3px; border-radius: 2px; background: #7f8f7b; }
.focused::after { width: 16px; background: #10b5c4; }
.focused::before { content: ""; position: absolute; top: 3px; bottom: 2px; left: 3px; right: 3px; border-radius: 4px; background: #eaf5e0; }
.focused svg { position: relative; }
.profile-dot { position: absolute; top: 5px; right: 5px; width: 15px; height: 15px; border-radius: 8px; background: #c3390e; color: #fff; font-size: 9px; line-height: 15px; }
.profile-dot.dark { background: radial-gradient(ellipse 5px 2px, #8a1414, #000); }
.tray { justify-self: end; display: flex; align-items: center; padding-right: 19px; }
.tray svg { width: 16px; height: 16px; fill: none; stroke: #222; stroke-width: 1.3; }
.tray .cloud { margin-left: 16px; }
.status { display: flex; gap: 7px; margin: 0 19px 0 16px; }
.clock { text-align: right; }
```
